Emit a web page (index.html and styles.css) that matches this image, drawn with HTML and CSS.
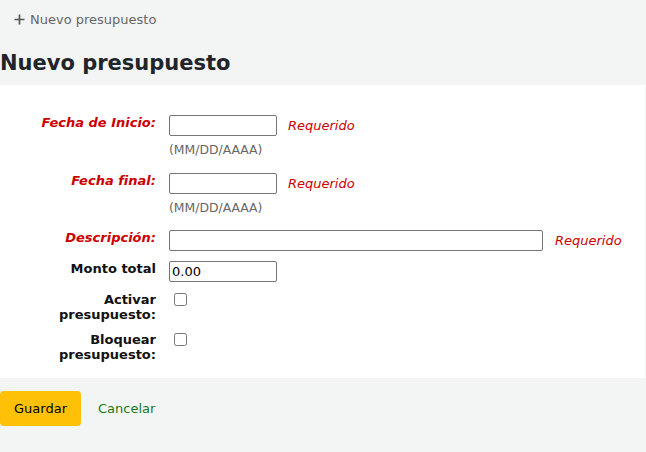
FILE: index.html
```html
<!DOCTYPE html>
<html lang="es">
<head>
<meta charset="utf-8">
<title>Nuevo presupuesto</title>
<link rel="stylesheet" href="styles.css">
</head>
<body>
<div class="toolbar">
  <a class="tb-btn" href="#">
    <svg class="plus" width="11" height="11" viewBox="0 0 11 11" aria-hidden="true"><path d="M5.5 0.5V10.5M0.5 5.5H10.5" stroke="#555" stroke-width="1.7" fill="none"/></svg>
    <span>Nuevo presupuesto</span>
  </a>
</div>
<h1 class="title">Nuevo presupuesto</h1>
<form class="panel">
  <ol class="rows">
    <li class="row">
      <label class="lbl required">Fecha de Inicio:</label>
      <div class="field">
        <div class="inline">
          <input class="txt date" type="text">
          <span class="req">Requerido</span>
        </div>
        <div class="hint">(MM/DD/AAAA)</div>
      </div>
    </li>
    <li class="row">
      <label class="lbl required">Fecha final:</label>
      <div class="field">
        <div class="inline">
          <input class="txt date" type="text">
          <span class="req">Requerido</span>
        </div>
        <div class="hint">(MM/DD/AAAA)</div>
      </div>
    </li>
    <li class="row">
      <label class="lbl required">Descripción:</label>
      <div class="field">
        <div class="inline inline-wide">
          <input class="txt desc" type="text">
          <span class="req">Requerido</span>
        </div>
      </div>
    </li>
    <li class="row">
      <label class="lbl">Monto total</label>
      <div class="field">
        <input class="txt date" type="text" value="0.00">
      </div>
    </li>
    <li class="row">
      <label class="lbl">Activar presupuesto:</label>
      <div class="field">
        <input class="chk" type="checkbox">
      </div>
    </li>
    <li class="row">
      <label class="lbl">Bloquear presupuesto:</label>
      <div class="field">
        <input class="chk" type="checkbox">
      </div>
    </li>
  </ol>
</form>
<div class="actions">
  <button class="btn-save" type="button">Guardar</button>
  <a class="cancel" href="#">Cancelar</a>
</div>
</body>
</html>
```

FILE: styles.css
```css
html, body {
  margin: 0;
  padding: 0;
}
body {
  background: #f3f4f4;
  font-family: "DejaVu Sans", sans-serif;
  font-size: 13px;
  color: #000;
}
.toolbar {
  padding: 12px 0 0 14px;
}
.tb-btn {
  display: inline-flex;
  align-items: center;
  gap: 5px;
  color: #666;
  text-decoration: none;
  line-height: 15px;
}
.plus {
  display: block;
}
.title {
  margin: 23px 0 10px;
  font-size: 21px;
  line-height: 24px;
  font-weight: bold;
  color: #212529;
}
.panel {
  background: #fff;
  margin: 0 1px 0 0;
  padding: 30px 0 16px;
}
.rows {
  list-style: none;
  margin: 0;
  padding: 0;
}
.row {
  display: grid;
  grid-template-columns: 117px 1fr;
  column-gap: 13px;
  padding-left: 39px;
  margin-bottom: 10px;
}
.row:last-child {
  margin-bottom: 0;
}
.lbl {
  text-align: right;
  font-weight: bold;
  line-height: 15px;
  color: #111;
}
.lbl.required {
  color: #c00;
  font-style: italic;
}
.field {
  display: flex;
  flex-direction: column;
  align-items: flex-start;
}
.inline {
  display: flex;
  align-items: center;
  gap: 11px;
}
.inline-wide {
  gap: 12px;
}
.txt {
  box-sizing: border-box;
  height: 21px;
  margin: 0;
  padding: 1px 2px;
  border: 1px solid #767676;
  border-radius: 2px;
  font-family: "DejaVu Sans", sans-serif;
  font-size: 13px;
  color: #000;
  background: #fff;
}
.date {
  width: 108px;
}
.desc {
  width: 374px;
}
.req {
  color: #c00;
  font-style: italic;
  line-height: 15px;
}
.hint {
  margin: 7px 0 5.5px;
  font-size: 12.4px;
  line-height: 14px;
  color: #666;
}
.chk {
  width: 13px;
  height: 13px;
  margin: 1px 0 0 5px;
}
.actions {
  display: flex;
  align-items: center;
  margin-top: 13px;
}
.btn-save {
  border: 0;
  border-radius: 4px;
  background: #ffc107;
  color: #000;
  font-family: "DejaVu Sans", sans-serif;
  font-size: 13px;
  line-height: 15px;
  padding: 10px 14px;
  width: 81px;
  height: 35px;
}
.cancel {
  margin-left: 17px;
  color: #1a7a1a;
  text-decoration: none;
  line-height: 15px;
}
```
